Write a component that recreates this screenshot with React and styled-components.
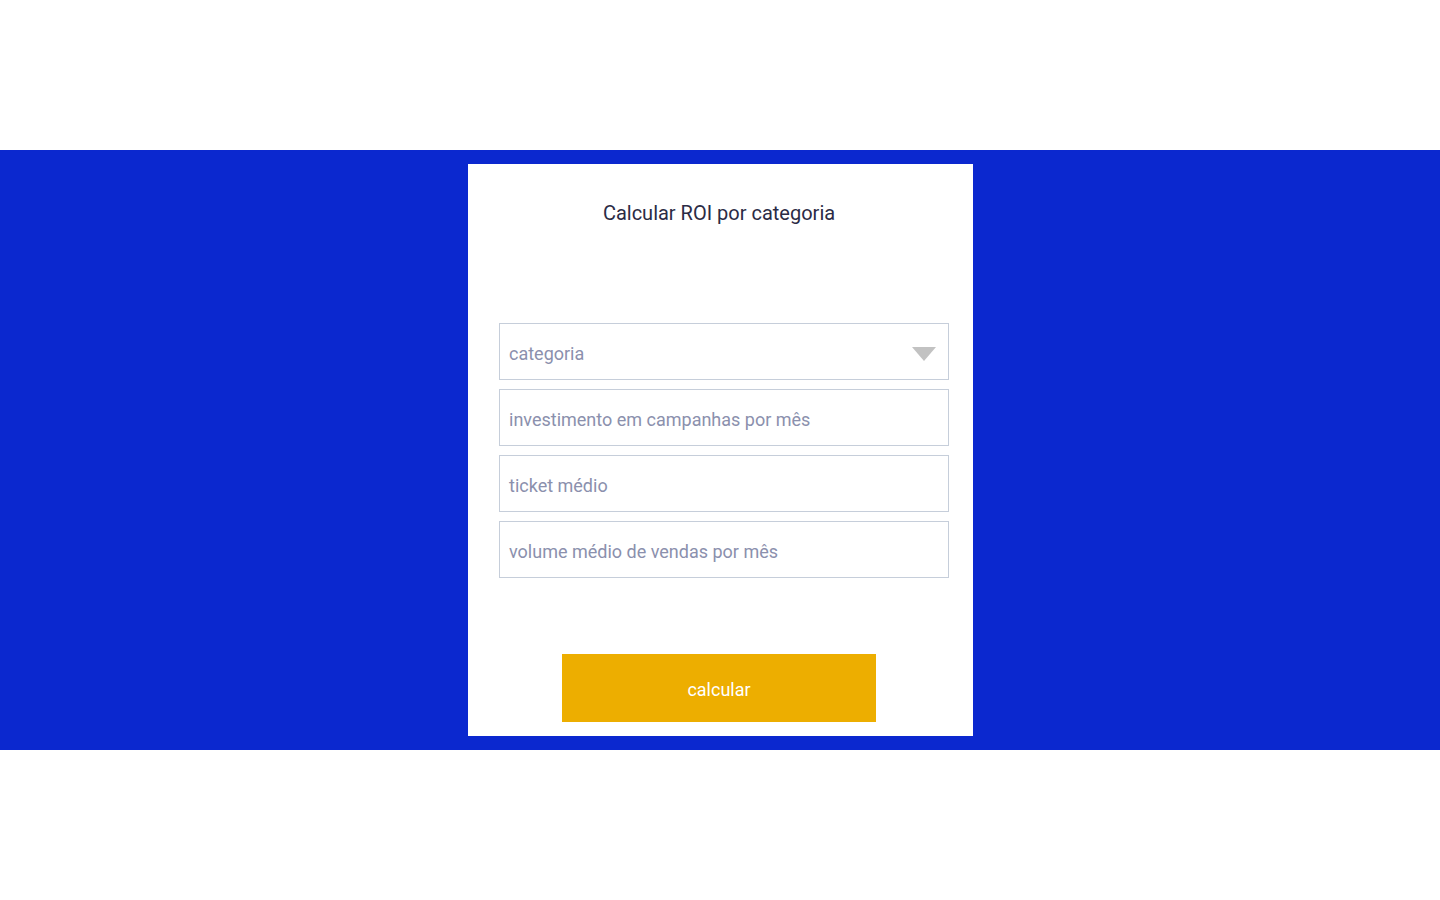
import React from "react";
import styled, { createGlobalStyle } from "styled-components";

const GlobalStyle = createGlobalStyle`
	body {
		margin: 0;
		background: #ffffff;
		font-family: Roboto, "Liberation Sans", sans-serif;
	}
`;

const fields = [
	"investimento em campanhas por mês",
	"ticket médio",
	"volume médio de vendas por mês",
];

const App = () => {
	return (
		<>
			<GlobalStyle />
			<Band>
				<Card>
					<Title>Calcular ROI por categoria</Title>
					<Form>
						<Field>
							<Placeholder>categoria</Placeholder>
							<Arrow viewBox="0 0 24 14">
								<polygon points="0,0 24,0 12,14" fill="#c2c2c2" />
							</Arrow>
						</Field>
						{fields.map((label) => (
							<Field key={label}>
								<Placeholder>{label}</Placeholder>
							</Field>
						))}
					</Form>
					<Button>calcular</Button>
				</Card>
			</Band>
		</>
	);
};

const Band = styled.div`
	margin-top: 150px;
	height: 600px;
	box-sizing: border-box;
	padding-top: 14px;
	background: #0b28cf;
	display: flex;
	justify-content: center;
	align-items: flex-start;
`;

const Card = styled.div`
	width: 505px;
	box-sizing: border-box;
	padding: 14px 0;
	background: #ffffff;
	display: flex;
	flex-direction: column;
`;

const Title = styled.h1`
	margin: 23px 0 0;
	font-size: 20px;
	line-height: 24px;
	font-weight: 400;
	color: #2b2b45;
	text-align: center;
	padding-right: 2px;
`;

const Form = styled.div`
	margin: 98px 0 0 31px;
	width: 450px;
	display: flex;
	flex-direction: column;
	gap: 9px;
`;

const Field = styled.div`
	height: 57px;
	box-sizing: border-box;
	border: 1px solid #c6ceda;
	padding: 0 12px 0 9.5px;
	display: flex;
	align-items: center;
	justify-content: space-between;
`;

const Placeholder = styled.span`
	font-size: 18px;
	color: #8b90ad;
	padding-top: 3px;
`;

const Arrow = styled.svg`
	width: 24px;
	height: 14px;
	margin-top: 5px;
`;

const Button = styled.button`
	margin: 76px 0 0 94px;
	width: 314px;
	height: 68px;
	border: none;
	background: #edae00;
	color: #ffffff;
	font-family: Roboto, "Liberation Sans", sans-serif;
	font-size: 18px;
	cursor: pointer;
	padding: 2px 0 0 1px;
`;

export default App;
